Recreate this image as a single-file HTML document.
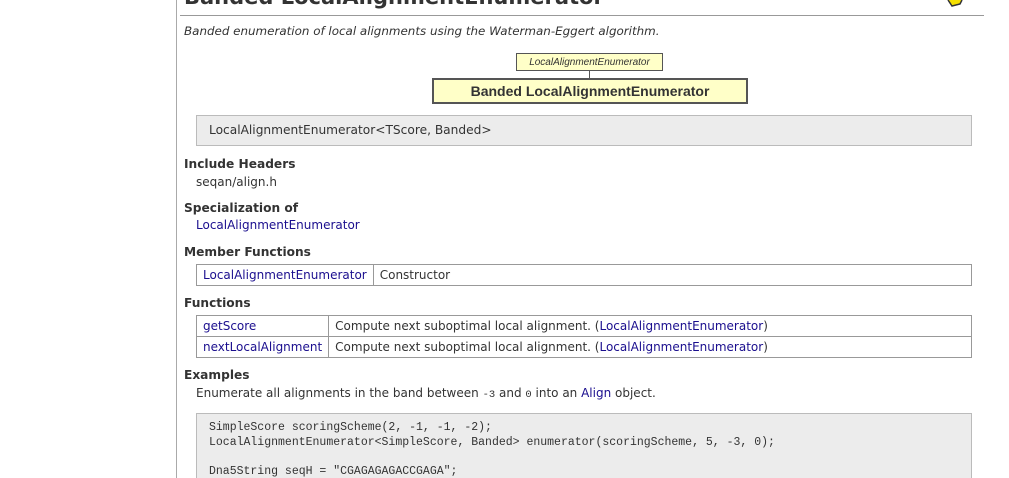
<!DOCTYPE html>
<html><head><meta charset="utf-8"><style>
html{overflow:hidden;height:478px}
body{margin:0;width:1009px;height:478px;background:#fff;overflow:hidden;position:relative;font-family:"DejaVu Sans","Liberation Sans",sans-serif;font-size:12px;color:#333}
.a{position:absolute;white-space:nowrap}
a,.l{color:#1a0e8e;text-decoration:none}
h{font-weight:bold;font-size:12.2px;color:#333}
table{border-collapse:collapse;position:absolute}
td{border:1px solid #999;padding:0 6px;height:20px;font-size:12px}
.m{font-family:"Liberation Mono",monospace;font-size:11.5px;color:#333}
</style></head><body>
<div class="a" style="left:176px;top:0;width:1px;height:478px;background:#aaa"></div>
<div class="a" style="left:184px;top:-15px;font-size:21px;font-weight:bold;color:#333">Banded LocalAlignmentEnumerator</div>
<div class="a" style="left:180px;top:15px;width:804px;height:1px;background:#999"></div>
<svg class="a" style="left:940px;top:0" width="30" height="12"><path d="M8 0 L12 6 L20 4 L22 0" fill="#f5e000" stroke="#333" stroke-width="1.5"/></svg>
<div class="a" style="left:184px;top:24px;font-style:italic;font-size:11.9px">Banded enumeration of local alignments using the Waterman-Eggert algorithm.</div>
<div class="a" style="left:516px;top:53px;width:145px;height:16px;background:#ffffc8;border:1px solid #555;font-style:italic;font-size:10px;text-align:center;line-height:17px;font-family:'Liberation Sans',sans-serif">LocalAlignmentEnumerator</div>
<div class="a" style="left:589px;top:70px;width:1px;height:9px;background:#555"></div>
<div class="a" style="left:432px;top:78px;width:312px;height:22px;background:#ffffc8;border:2px solid #555;font-weight:bold;font-size:14px;text-align:center;line-height:22px;font-family:'Liberation Sans',sans-serif">Banded LocalAlignmentEnumerator</div>
<div class="a" style="left:196px;top:115px;width:774px;height:29px;background:#ececec;border:1px solid #bbb"></div>
<div class="a" style="left:209px;top:123px;font-size:12.2px">LocalAlignmentEnumerator&lt;TScore, Banded&gt;</div>
<div class="a" style="left:184px;top:157px"><h>Include Headers</h></div>
<div class="a" style="left:196px;top:175px">seqan/align.h</div>
<div class="a" style="left:184px;top:201px"><h>Specialization of</h></div>
<div class="a" style="left:196px;top:218px"><span class="l">LocalAlignmentEnumerator</span></div>
<div class="a" style="left:184px;top:245px"><h>Member Functions</h></div>
<table style="left:196px;top:264px;width:776px"><tr><td style="width:163px" class="l">LocalAlignmentEnumerator</td><td>Constructor</td></tr></table>
<div class="a" style="left:184px;top:296px"><h>Functions</h></div>
<table style="left:196px;top:315px;width:776px">
<tr><td style="width:118px" class="l">getScore</td><td>Compute next suboptimal local alignment. (<span class="l">LocalAlignmentEnumerator</span>)</td></tr>
<tr><td class="l">nextLocalAlignment</td><td>Compute next suboptimal local alignment. (<span class="l">LocalAlignmentEnumerator</span>)</td></tr></table>
<div class="a" style="left:184px;top:368px"><h>Examples</h></div>
<div class="a" style="left:196px;top:386px">Enumerate all alignments in the band between <span class="m" style="font-size:10.5px">-3</span> and <span class="m" style="font-size:10.5px">0</span> into an <span class="l">Align</span> object.</div>
<div class="a" style="left:196px;top:413px;width:774px;height:80px;background:#ececec;border:1px solid #bbb"></div>
<div class="a m" style="left:209px;top:421px;line-height:14.5px">SimpleScore scoringScheme(2, -1, -1, -2);<br>LocalAlignmentEnumerator&lt;SimpleScore, Banded&gt; enumerator(scoringScheme, 5, -3, 0);<br><br>Dna5String seqH = "CGAGAGAGACCGAGA";</div>
</body></html>
